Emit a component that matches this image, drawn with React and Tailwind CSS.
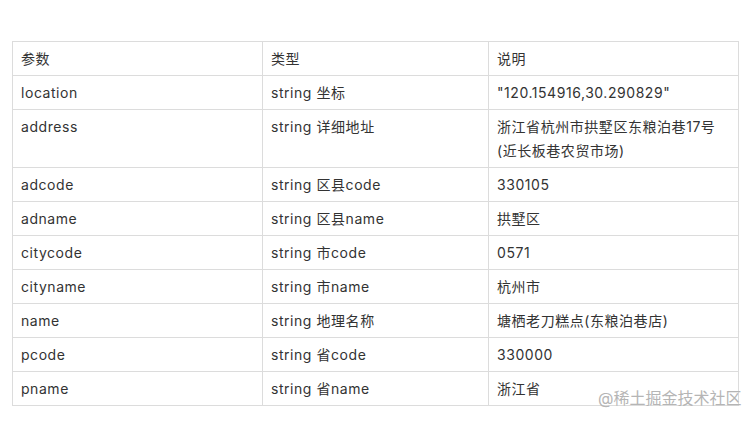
const rows = [
  ['location', 'string 坐标', '"120.154916,30.290829"'],
  ['address', 'string 详细地址', '浙江省杭州市拱墅区东粮泊巷17号(近长板巷农贸市场)'],
  ['adcode', 'string 区县code', '330105'],
  ['adname', 'string 区县name', '拱墅区'],
  ['citycode', 'string 市code', '0571'],
  ['cityname', 'string 市name', '杭州市'],
  ['name', 'string 地理名称', '塘栖老刀糕点(东粮泊巷店)'],
  ['pcode', 'string 省code', '330000'],
  ['pname', 'string 省name', '浙江省'],
];

export default function App() {
  return (
    <div
      className="relative w-[754px] h-[421px] bg-white pt-[41px] pl-[12px] text-[14px] tracking-[0.55px] text-[#333]"
      style={{ fontFamily: 'Inter, "Noto Sans CJK SC", sans-serif' }}
    >
      <table className="border-collapse w-[726px] table-fixed">
        <colgroup>
          <col className="w-[250px]" />
          <col className="w-[226px]" />
          <col className="w-[250px]" />
        </colgroup>
        <thead>
          <tr>
            {['参数', '类型', '说明'].map((h) => (
              <th
                key={h}
                className="border border-[#dcdcdc] pl-[8px] pr-2 pt-[5px] pb-[4px] leading-6 text-left font-normal align-top"
              >
                {h}
              </th>
            ))}
          </tr>
        </thead>
        <tbody>
          {rows.map((r) => (
            <tr key={r[0]}>
              {r.map((c, i) => (
                <td
                  key={i}
                  className="border border-[#dcdcdc] pl-[8px] pr-2 pt-[5px] pb-[4px] leading-6 align-top"
                >
                  {c}
                </td>
              ))}
            </tr>
          ))}
        </tbody>
      </table>
      {/* watermark */}
      <div className="absolute left-[598px] top-[387px] text-[16px] leading-[22px] tracking-normal text-[#b5b5b5] whitespace-nowrap">
        @稀土掘金技术社区
      </div>
    </div>
  );
}
